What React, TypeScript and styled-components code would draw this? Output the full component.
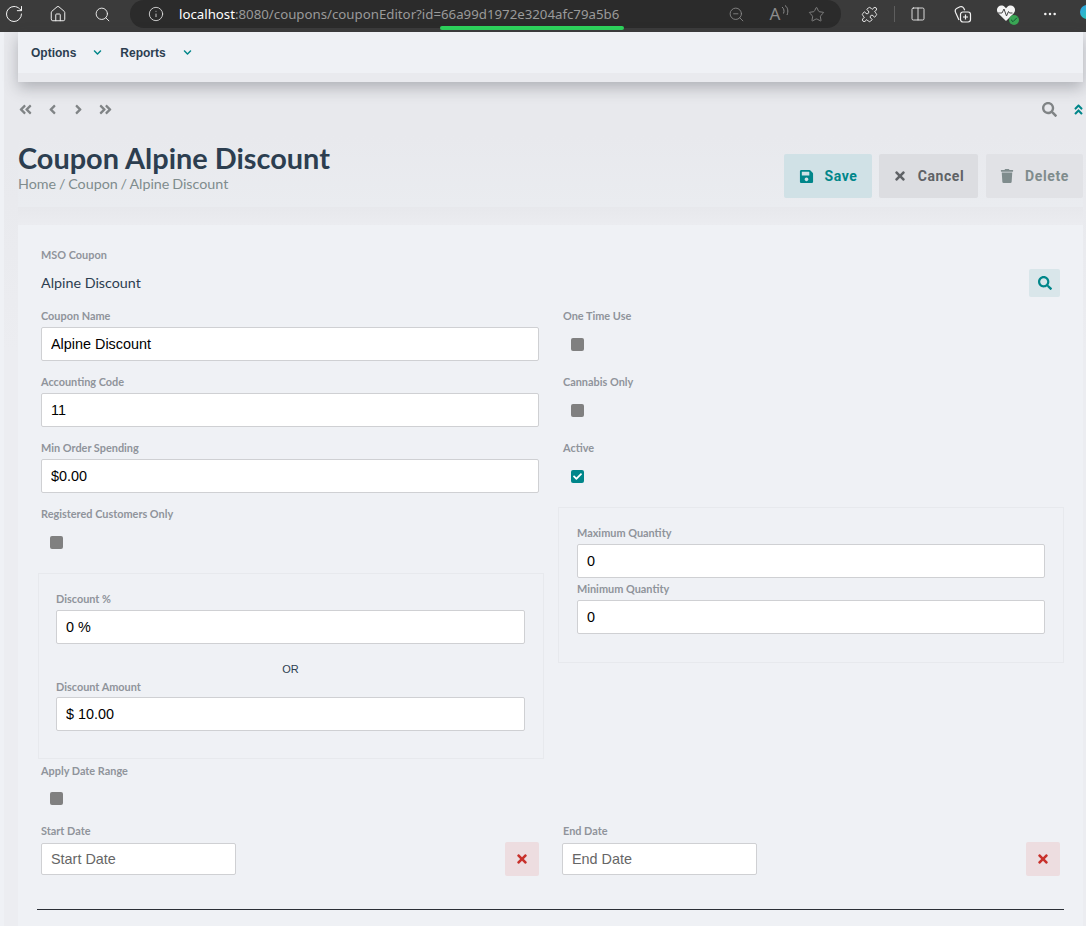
import React from "react";
import styled, { createGlobalStyle } from "styled-components";
import { RotateCw, Home, Search, Info, ZoomOut, Star, Puzzle, Columns2, MoreHorizontal, Check } from "lucide-react";
import {
  FaAngleDoubleLeft, FaAngleDoubleRight, FaAngleLeft, FaAngleRight, FaAngleDoubleUp,
  FaChevronDown, FaSearch, FaSave, FaTimes, FaTrash, FaCheck,
} from "react-icons/fa";

const Global = createGlobalStyle`
  html, body { margin: 0; padding: 0; height: 926px; overflow: hidden; background: #eff1f5; }
  #root { height: 926px; overflow: hidden; }
  * { box-sizing: border-box; }
`;

const Browser = styled.div`
  height: 32px; background: #3b3b3b; display: flex; align-items: flex-start; position: relative;
  color: #f2f2f2; overflow: hidden;
`;
const ToolSlot = styled.div<{ $w: number }>`
  width: ${p => p.$w}px; height: 28px; flex: none; display: flex; align-items: center; justify-content: center;
`;
const Pill = styled.div`
  width: 711px; height: 28px; margin: 0 6px 0 2px; padding-left: 18px; flex: none; background: #2b2b2b;
  border-radius: 14px; display: flex; align-items: center; color: #b5b5b5;
`;
const Url = styled.div`
  font: 13.25px "Noto Sans", sans-serif; color: #9a9a9a; margin-left: 15px; flex: 1; white-space: nowrap;
  b { font-weight: 400; color: #ffffff; }
`;
const Underline = styled.div`
  position: absolute; left: 440px; top: 26px; width: 184px; height: 4px; border-radius: 2px; background: #2dd45c;
`;
const PillIcons = styled.div`
  display: flex; align-items: center; margin-right: 5px;
`;
const PillSlot = styled.div`
  width: 40px; display: flex; align-items: center; justify-content: center; color: #8c8c8c; position: relative;
`;
const ReadAloud = styled.span`
  font: 17px "Noto Sans", sans-serif; color: #8c8c8c; line-height: 20px; margin-right: 2px;
`;
const Arcs = styled.svg`
  position: absolute; left: 25px; top: 1px;
`;
const Divider = styled.div`
  width: 1px; height: 16px; background: #5e5e5e; margin: 6px 0 0 3px; flex: none;
`;
const EdgeLogo = styled.div`
  width: 16px; height: 14px; margin: 5px 0 0 8px; flex: none; border-radius: 8px;
  background: linear-gradient(135deg, #2f9fe8, #2dd4a0);
`;
const HeartWrap = styled.div`
  position: relative; width: 20px; height: 20px;
`;
const Badge = styled.div`
  position: absolute; right: -3px; bottom: -1px; width: 10px; height: 10px; border-radius: 50%;
  background: #3aa655; display: flex; align-items: center; justify-content: center; color: #153;
`;

const Shell = styled.div`
  height: 894px; margin-left: 4px; padding: 0 3px 0 14px;
  background: linear-gradient(#e8e9ed 120px, #ecedf1 320px);
`;
const MenuBar = styled.div`
  height: 50px; background: linear-gradient(#eff1f5 41px, #e9eaee 41px); display: flex; align-items: flex-start;
  padding: 13px 0 0 13px; box-shadow: 0 6px 14px rgba(60, 62, 70, 0.32); position: relative;
`;
const MenuItem = styled.div`
  font: bold 12px "Liberation Sans", sans-serif; color: #2c3e50; display: flex; align-items: center; height: 15px;
  margin-right: 18px;
  svg { color: #00868a; margin-left: 17px; }
`;
const NavRow = styled.div`
  height: 54px; display: flex; align-items: center; color: #808486; font-size: 15px;
`;
const NavIcon = styled.span`
  display: flex; width: 26.5px; align-items: center;
`;
const NavEnd = styled.div`
  margin-left: auto; display: flex; align-items: center; gap: 15px; margin-right: -2px;
  svg:last-child { color: #00868a; }
`;
const Header = styled.div`
  height: 71px; padding: 6px 0 0; display: flex; justify-content: space-between;
  background: linear-gradient(#e8e9ed, #eaecf0);
`;
const Title = styled.h1`
  margin: 0 0 1px; font: 700 28.9px/32px Lato, sans-serif; color: #2c3e50; white-space: nowrap;
`;
const Crumb = styled.div`
  font: 14.3px/18px Lato, sans-serif; color: #7f8c8d; word-spacing: -0.85px;
`;
const Actions = styled.div`
  display: flex; gap: 7px; padding-top: 12px; align-items: flex-start;
`;
const ActionBtn = styled.div<{ $bg: string; $fg: string; $w: number; $ml?: number }>`
  width: ${p => p.$w}px; height: 44px; margin-left: ${p => p.$ml ?? 0}px; border-radius: 2px;
  background: ${p => p.$bg}; color: ${p => p.$fg};
  font: 700 14px Roboto, sans-serif; letter-spacing: .6px; display: flex; align-items: center; justify-content: center; gap: 11px;
`;
const Spacer = styled.div`
  height: 18px; background: linear-gradient(#e7e8ec, #ebecf0);
`;
const Card = styled.div`
  height: 720px; background: #eff1f5; padding: 19px 19px 0 20px;
`;
const Label = styled.div`
  font: 700 10.9px/22px Lato, sans-serif; color: #8f949b; height: 22px; white-space: nowrap;
`;
const MsoRow = styled.div`
  margin: 0 4px 5px 3px;
`;
const MsoValue = styled.div`
  height: 34px; padding-bottom: 1px; display: flex; align-items: center; justify-content: space-between;
  font: 14.3px Lato, sans-serif; color: #2c3e50;
`;
const IconBtn = styled.div<{ $danger?: boolean }>`
  flex: none; width: ${p => (p.$danger ? 34 : 31)}px; height: ${p => (p.$danger ? 34 : 28)}px; border-radius: 2px;
  background: ${p => (p.$danger ? "#eddde0" : "#d9e6ea")}; color: ${p => (p.$danger ? "#c8312b" : "#00868a")};
  display: flex; align-items: center; justify-content: center; font-size: 14px;
`;
const Columns = styled.div`
  display: grid; grid-template-columns: 506px 506px; column-gap: 14px; align-items: start;
`;
const Col = styled.div``;
const Field = styled.div<{ $left?: number; $right?: number; $bottom?: number }>`
  margin: 0 ${p => p.$right ?? 5}px ${p => p.$bottom ?? 10}px ${p => p.$left ?? 3}px;
`;
const Input = styled.input<{ $w?: number; $h?: number }>`
  display: block; width: ${p => (p.$w ? `${p.$w}px` : "100%")}; height: ${p => p.$h ?? 34}px;
  border: 1px solid #cfd0d3; border-radius: 2px;
  background: #fff; padding: 0 9px; font: 14.4px "Liberation Sans", sans-serif; color: #000; outline: none;
  &::placeholder { color: #666; opacity: 1; }
`;
const CheckRow = styled.div<{ $x: number; $h?: number; $top?: number }>`
  height: ${p => p.$h ?? 44}px; padding: ${p => p.$top ?? 11}px 0 0 ${p => p.$x}px;
`;
const Box = styled.div<{ $on?: boolean }>`
  width: 13px; height: 13px; border-radius: 2px; background: ${p => (p.$on ? "#00868a" : "#808080")};
  color: #fff; display: flex; align-items: center; justify-content: center; font-size: 9px;
`;
const Panel = styled.div<{ $h: number; $top?: number }>`
  height: ${p => p.$h}px; margin-top: ${p => p.$top ?? 0}px; border: 1px solid #e7e9ed; padding: 14px 18px 0 17px;
`;
const RightPanel = styled(Panel)`
  padding-left: 18px;
`;
const Or = styled.div`
  font: 11px/16px "Liberation Sans", sans-serif; color: #2c3e50; text-align: center; height: 32px; padding-top: 17px;
`;
const AmountInput = styled(Input)`
  margin-top: -1px;
`;
const DateRow = styled.div`
  display: flex; justify-content: space-between; align-items: center;
`;
const ApplyField = styled(Field)`
  margin-top: 1px;
`;
const DateLabel = styled(Label)`
  padding-left: 1px;
`;
const Rule = styled.hr`
  margin: 33px 0 0 -1px; width: 1027px; border: 0; height: 1px; background: #2b2f36;
`;

const CollectionsIcon = () => (
  <svg width="20" height="20" viewBox="0 0 20 20" fill="none" stroke="currentColor" strokeWidth="1.2">
    <path d="M7 16 3.6 8.5C2.8 6.6 3.4 5 5 4.2l3-1.4c1.5-.6 3 0 3.8 1.4l.9 2" />
    <rect x="8.5" y="8" width="10" height="10" rx="2.4" />
    <path d="M13.5 10.5v5M11 13h5" />
  </svg>
);
const HeartIcon = () => (
  <HeartWrap>
    <svg width="20" height="18" viewBox="0 0 20 18">
      <path d="M10 17 2.4 9.5C.4 7.4.5 4.4 2.3 2.700 4.200 1 7 1.200 8.800 3L10 4.200 11.200 3C13 1.200 15.800 1 17.700 2.700c1.800 1.700 1.900 4.700-.1 6.800Z" fill="#f4f4f4" />
      <path d="M2 9h4l2-4 2.500 7 2-4.500 1 1.500h3" fill="none" stroke="#444" strokeWidth="1" />
    </svg>
    <Badge><Check size={8} strokeWidth={3} /></Badge>
  </HeartWrap>
);

export default function App() {
  return (
    <>
      <Global />
      <Browser>
        <ToolSlot $w={28}><RotateCw size={20} strokeWidth={1.2} /></ToolSlot>
        <ToolSlot $w={60}><Home size={18} strokeWidth={1.3} /></ToolSlot>
        <ToolSlot $w={28}><Search size={17} strokeWidth={1.3} /></ToolSlot>
        <ToolSlot $w={12} />
        <Pill>
          <Info size={16} strokeWidth={1.3} color="#e0e0e0" />
          <Url><b>localhost</b>:8080/coupons/couponEditor?id=66a99d1972e3204afc79a5b6</Url>
          <PillIcons>
            <PillSlot><ZoomOut size={17} strokeWidth={1.2} /></PillSlot>
            <PillSlot>
              <ReadAloud>A</ReadAloud>
              <Arcs width="8" height="12" viewBox="0 0 8 12" fill="none" stroke="#8c8c8c" strokeWidth="1">
                <path d="M1 2c2 1.500 2.500 4 1.500 6.500M4 0.500c3 2 3.500 6 2 9.500" />
              </Arcs>
            </PillSlot>
            <PillSlot><Star size={17} strokeWidth={1.2} /></PillSlot>
          </PillIcons>
        </Pill>
        <ToolSlot $w={44}><Puzzle size={17} strokeWidth={1.3} /></ToolSlot>
        <Divider />
        <ToolSlot $w={45}><Columns2 size={16} strokeWidth={1.3} /></ToolSlot>
        <ToolSlot $w={44}><CollectionsIcon /></ToolSlot>
        <ToolSlot $w={44}><HeartIcon /></ToolSlot>
        <ToolSlot $w={44}><MoreHorizontal size={16} strokeWidth={1.8} /></ToolSlot>
        <EdgeLogo />
        <Underline />
      </Browser>
      <Shell>
        <MenuBar>
          <MenuItem>Options<FaChevronDown size={9} /></MenuItem>
          <MenuItem>Reports<FaChevronDown size={9} /></MenuItem>
        </MenuBar>
        <NavRow>
          <NavIcon><FaAngleDoubleLeft /></NavIcon>
          <NavIcon><FaAngleLeft /></NavIcon>
          <NavIcon><FaAngleRight /></NavIcon>
          <NavIcon><FaAngleDoubleRight /></NavIcon>
          <NavEnd>
            <FaSearch size={15} />
            <FaAngleDoubleUp size={13} />
          </NavEnd>
        </NavRow>
        <Header>
          <div>
            <Title>Coupon Alpine Discount</Title>
            <Crumb>Home / Coupon / Alpine Discount</Crumb>
          </div>
          <Actions>
            <ActionBtn $bg="#d0e1e6" $fg="#00868a" $w={88}><FaSave size={15} />Save</ActionBtn>
            <ActionBtn $bg="#dcdde1" $fg="#5f6266" $w={99}><FaTimes size={14} />Cancel</ActionBtn>
            <ActionBtn $bg="#e1e2e6" $fg="#7f8c8d" $w={97} $ml={1}><FaTrash size={14} />Delete</ActionBtn>
          </Actions>
        </Header>
        <Spacer />
        <Card>
          <MsoRow>
            <Label>MSO Coupon</Label>
            <MsoValue>Alpine Discount<IconBtn><FaSearch /></IconBtn></MsoValue>
          </MsoRow>
          <Columns>
            <Col>
              <Field><Label>Coupon Name</Label><Input readOnly value="Alpine Discount" /></Field>
              <Field><Label>Accounting Code</Label><Input readOnly value="11" /></Field>
              <Field><Label>Min Order Spending</Label><Input readOnly value="$0.00" /></Field>
              <Field $bottom={0}><Label>Registered Customers Only</Label><CheckRow $x={9} $h={48}><Box /></CheckRow></Field>
              <Panel $h={186}>
                <Label>Discount %</Label>
                <Input readOnly value="0 %" />
                <Or>OR</Or>
                <Label>Discount Amount</Label>
                <AmountInput readOnly value="$ 10.00" />
              </Panel>
            </Col>
            <Col>
              <Field $left={5} $right={0} $bottom={0}><Label>One Time Use</Label><CheckRow $x={8}><Box /></CheckRow></Field>
              <Field $left={5} $right={0} $bottom={0}><Label>Cannabis Only</Label><CheckRow $x={8}><Box /></CheckRow></Field>
              <Field $left={5} $right={0} $bottom={0}><Label>Active</Label><CheckRow $x={8}><Box $on><FaCheck /></Box></CheckRow></Field>
              <RightPanel $h={156} $top={4}>
                <Label>Maximum Quantity</Label>
                <Input readOnly value="0" />
                <Label>Minimum Quantity</Label>
                <Input readOnly value="0" />
              </RightPanel>
            </Col>
          </Columns>
          <ApplyField $bottom={0}>
            <Label>Apply Date Range</Label>
            <CheckRow $x={9} $h={38} $top={10}><Box /></CheckRow>
          </ApplyField>
          <Columns>
            <Field $bottom={0}>
              <Label>Start Date</Label>
              <DateRow>
                <Input readOnly $w={195} $h={32} placeholder="Start Date" />
                <IconBtn $danger><FaTimes /></IconBtn>
              </DateRow>
            </Field>
            <Field $left={4} $right={4} $bottom={0}>
              <DateLabel>End Date</DateLabel>
              <DateRow>
                <Input readOnly $w={195} $h={32} placeholder="End Date" />
                <IconBtn $danger><FaTimes /></IconBtn>
              </DateRow>
            </Field>
          </Columns>
          <Rule />
        </Card>
      </Shell>
    </>
  );
}
